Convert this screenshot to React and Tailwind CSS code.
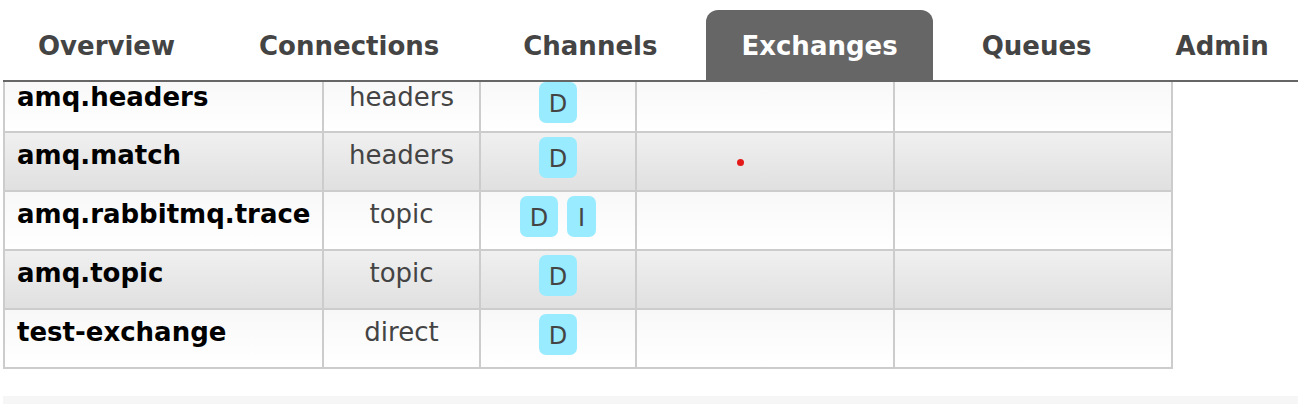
const tabs = ['Overview', 'Connections', 'Channels', 'Exchanges', 'Queues', 'Admin']

const rows = [
  { name: 'amq.headers', type: 'headers', features: ['D'] },
  { name: 'amq.match', type: 'headers', features: ['D'], dot: true },
  { name: 'amq.rabbitmq.trace', type: 'topic', features: ['D', 'I'] },
  { name: 'amq.topic', type: 'topic', features: ['D'] },
  { name: 'test-exchange', type: 'direct', features: ['D'] },
]

function Badge({ label }) {
  return (
    <span
      className={`inline-flex items-center justify-center h-[41px] rounded-[7px] bg-[#99ebff] text-[#444] text-[24px] leading-none ${
        label === 'I' ? 'w-[29px]' : 'w-[38px]'
      }`}
    >
      <span className="pt-[3px]">{label}</span>
    </span>
  )
}

function Row({ row, index }) {
  const alt = index % 2 === 1
  const first = index === 0
  const bg = alt
    ? 'bg-gradient-to-b from-[#f0f0f0] to-[#e0e0e0]'
    : 'bg-gradient-to-b from-[#f8f8f8] to-[#ffffff]'
  const height = first ? 'h-[51px]' : 'h-[59px]'
  const textPad = first ? 'pt-[0px]' : 'pt-[7px]'
  const badgePad = first ? 'pt-[0px]' : 'pt-[4px]'

  return (
    <div className={`flex ${height} ${bg} border-b-2 border-[#ccc]`}>
      <div className={`w-[319px] border-r-2 border-[#ccc] pl-[12px] ${textPad} text-[26px] leading-[30px] font-bold text-black`}>
        {row.name}
      </div>
      <div className={`w-[157px] border-r-2 border-[#ccc] ${textPad} text-center text-[26px] leading-[30px] text-[#444]`}>
        {row.type}
      </div>
      <div className={`w-[156px] border-r-2 border-[#ccc] ${badgePad} flex justify-center items-start gap-[9px]`}>
        {row.features.map((f) => (
          <Badge key={f} label={f} />
        ))}
      </div>
      <div className="relative w-[258px] border-r-2 border-[#ccc]">
        {row.dot && (
          <span className="absolute left-[100px] top-[26px] h-[7px] w-[7px] rounded-full bg-[#e41a1a]"></span>
        )}
      </div>
      <div className="w-[278px] border-r-2 border-[#ccc]"></div>
    </div>
  )
}

export default function App() {
  return (
    <div className="w-[1298px] h-[404px] overflow-hidden bg-white font-['DejaVu_Sans',sans-serif]">
      <nav className="ml-[3px] h-[82px] flex items-end gap-[14px] border-b-2 border-[#666]">
        {tabs.map((t) => (
          <div
            key={t}
            className={`h-[70px] px-[35px] flex items-center pt-[2px] text-[26px] font-bold ${
              t === 'Exchanges' ? 'bg-[#666] text-white rounded-t-[12px]' : 'text-[#444]'
            }`}
          >
            {t}
          </div>
        ))}
      </nav>
      <div className="ml-[3px] w-[1170px] border-l-2 border-[#ccc]">
        {rows.map((r, i) => (
          <Row key={r.name} row={r} index={i} />
        ))}
      </div>
      <div className="ml-[3px] mt-[27px] h-[20px] bg-[#f6f6f6]"></div>
    </div>
  )
}
